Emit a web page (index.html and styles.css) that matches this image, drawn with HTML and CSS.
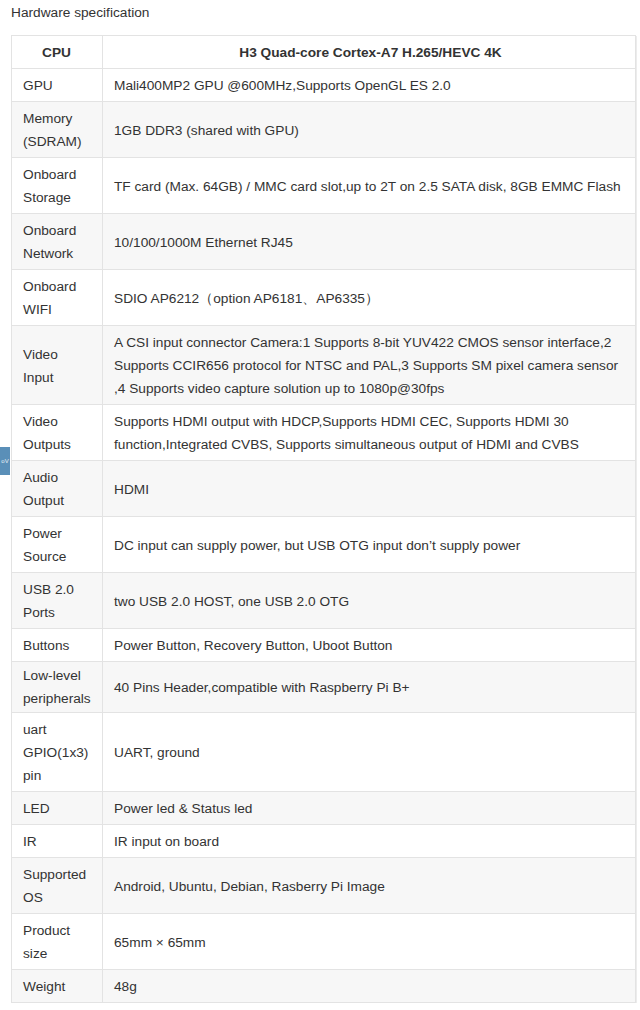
FILE: index.html
```html
<!DOCTYPE html>
<html lang="en">

<head>
    <meta charset="UTF-8">
    <meta name="viewport" content="width=device-width, initial-scale=1.0">
    <title>Hardware specification</title>
    <link rel="stylesheet" href="styles.css">
</head>

<body>
    <div class="side-tab">oV</div>

    <p class="spec-title">Hardware specification</p>

    <table class="spec-table">
        <colgroup>
            <col class="col-name">
            <col>
        </colgroup>
        <thead>
            <tr>
                <th>CPU</th>
                <th>H3 Quad-core Cortex-A7 H.265/HEVC 4K</th>
            </tr>
        </thead>
        <tbody>
            <tr>
                <td>GPU</td>
                <td>Mali400MP2 GPU @600MHz,Supports OpenGL ES 2.0</td>
            </tr>
            <tr>
                <td>Memory (SDRAM)</td>
                <td>1GB DDR3 (shared with GPU)</td>
            </tr>
            <tr>
                <td>Onboard Storage</td>
                <td>TF card (Max. 64GB) / MMC card slot,up to 2T on 2.5 SATA disk, 8GB EMMC Flash</td>
            </tr>
            <tr>
                <td>Onboard Network</td>
                <td>10/100/1000M Ethernet RJ45</td>
            </tr>
            <tr>
                <td>Onboard WIFI</td>
                <td>SDIO AP6212（option AP6181、AP6335）</td>
            </tr>
            <tr>
                <td>Video Input</td>
                <td>A CSI input connector Camera:1 Supports 8-bit YUV422 CMOS sensor interface,2 Supports CCIR656 protocol for NTSC and PAL,3 Supports SM pixel camera sensor ,4 Supports video capture solution up to 1080p@30fps</td>
            </tr>
            <tr>
                <td>Video Outputs</td>
                <td>Supports HDMI output with HDCP,Supports HDMI CEC, Supports HDMI 30 function,Integrated CVBS, Supports simultaneous output of HDMI and CVBS</td>
            </tr>
            <tr>
                <td>Audio Output</td>
                <td>HDMI</td>
            </tr>
            <tr>
                <td>Power Source</td>
                <td>DC input can supply power, but USB OTG input don’t supply power</td>
            </tr>
            <tr>
                <td>USB 2.0 Ports</td>
                <td>two USB 2.0 HOST, one USB 2.0 OTG</td>
            </tr>
            <tr>
                <td>Buttons</td>
                <td>Power Button, Recovery Button, Uboot Button</td>
            </tr>
            <tr class="row-tight">
                <td>Low-level peripherals</td>
                <td>40 Pins Header,compatible with Raspberry Pi B+</td>
            </tr>
            <tr>
                <td>uart GPIO(1x3) pin</td>
                <td>UART, ground</td>
            </tr>
            <tr>
                <td>LED</td>
                <td>Power led &amp; Status led</td>
            </tr>
            <tr>
                <td>IR</td>
                <td>IR input on board</td>
            </tr>
            <tr>
                <td>Supported OS</td>
                <td>Android, Ubuntu, Debian, Rasberry Pi Image</td>
            </tr>
            <tr>
                <td>Product size</td>
                <td>65mm × 65mm</td>
            </tr>
            <tr>
                <td>Weight</td>
                <td>48g</td>
            </tr>
        </tbody>
    </table>
</body>

</html>
```

FILE: styles.css
```css
body {
    margin: 0;
    padding: 3px 4px 0 11px;
    background-color: #fff;
    font-family: "Liberation Sans", Arial, sans-serif;
    font-size: 13.7px;
    color: #333;
}

.spec-title {
    margin: 0 0 12px 0;
    line-height: 20px;
}

.side-tab {
    position: absolute;
    left: 0;
    top: 447px;
    width: 10px;
    height: 28px;
    background-color: #5a8fb8;
    color: #e8f0f6;
    font-size: 6px;
    line-height: 28px;
    text-align: center;
    white-space: nowrap;
}

.spec-table {
    width: 625px;
    border-collapse: collapse;
    table-layout: fixed;
    box-shadow: 1px 1px 0 #ececec;
}

.col-name {
    width: 91px;
}

.spec-table th,
.spec-table td {
    border: 1px solid #e3e3e3;
    padding: 5px 8px 4px 11px;
    line-height: 23px;
    vertical-align: middle;
}

.spec-table th:first-child,
.spec-table td:first-child {
    padding-right: 12px;
}

.spec-table th {
    text-align: center;
    font-weight: bold;
}

.spec-table td {
    text-align: left;
}

.spec-table tbody tr:nth-child(even) {
    background-color: #f7f7f7;
}

.spec-table .row-tight td {
    padding-top: 2px;
    padding-bottom: 2px;
}
```
